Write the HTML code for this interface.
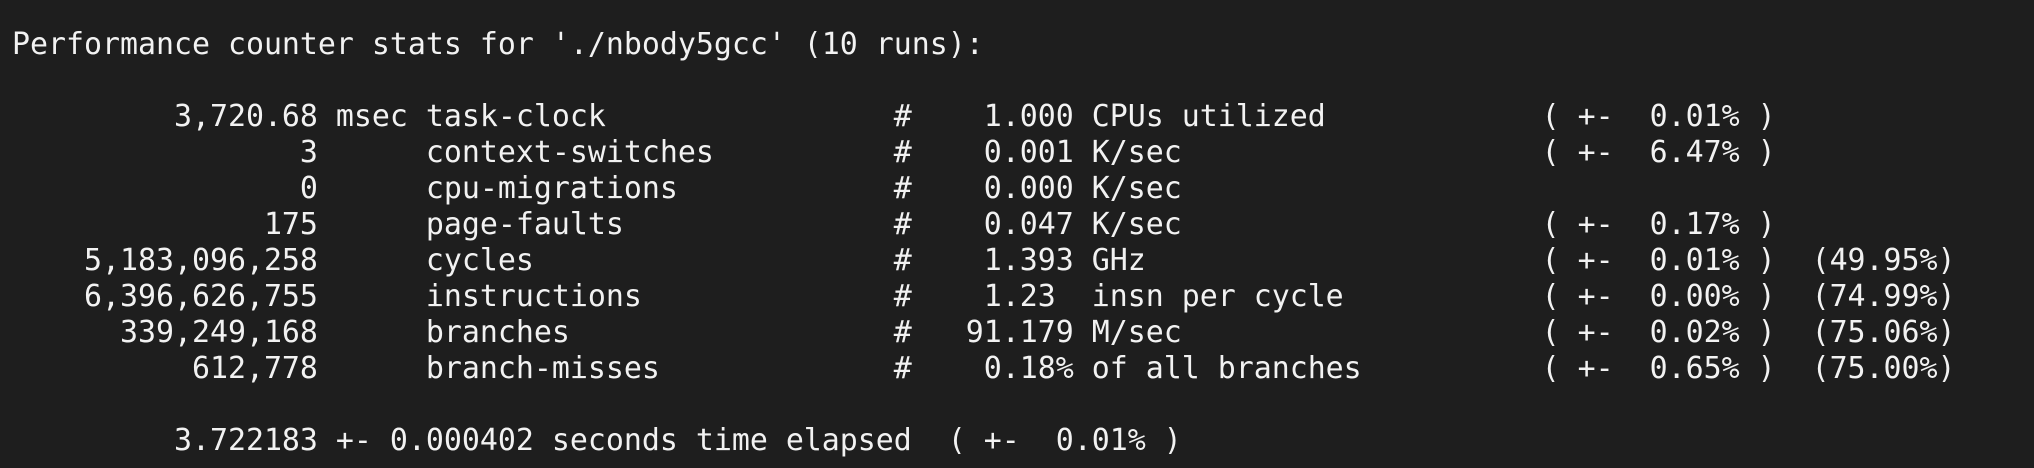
<!DOCTYPE html>
<html><head><style>
html,body{margin:0;padding:0;background:#1e1e1e;width:2034px;height:468px;overflow:hidden}
pre{margin:0;position:absolute;left:12px;top:27px;font-family:"DejaVu Sans Mono","Liberation Mono",monospace;font-size:29.9px;line-height:36px;color:#f2f2f2}
</style></head><body>
<pre>Performance counter stats for './nbody5gcc' (10 runs):

         3,720.68 msec task-clock                #    1.000 CPUs utilized            ( +-  0.01% )
                3      context-switches          #    0.001 K/sec                    ( +-  6.47% )
                0      cpu-migrations            #    0.000 K/sec
              175      page-faults               #    0.047 K/sec                    ( +-  0.17% )
    5,183,096,258      cycles                    #    1.393 GHz                      ( +-  0.01% )  (49.95%)
    6,396,626,755      instructions              #    1.23  insn per cycle           ( +-  0.00% )  (74.99%)
      339,249,168      branches                  #   91.179 M/sec                    ( +-  0.02% )  (75.06%)
          612,778      branch-misses             #    0.18% of all branches          ( +-  0.65% )  (75.00%)

         3.722183 +- 0.000402 seconds time elapsed  ( +-  0.01% )
</pre>
</body></html>
